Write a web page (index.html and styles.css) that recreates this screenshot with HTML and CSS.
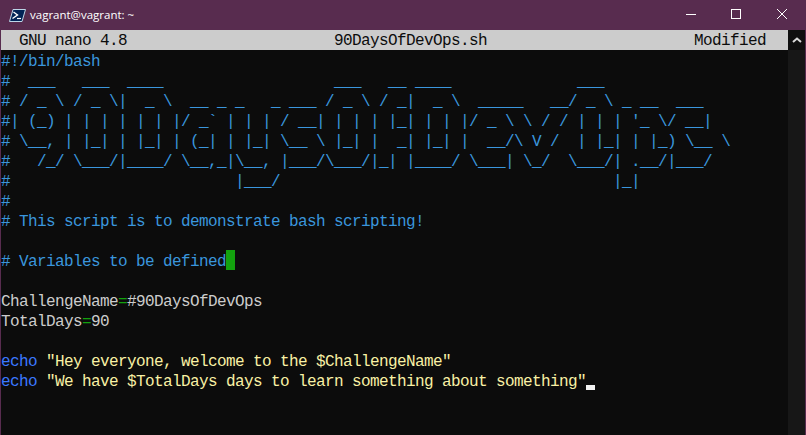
FILE: index.html
```
<!DOCTYPE html>
<html lang="en">
<head>
<meta charset="utf-8">
<title>vagrant@vagrant: ~</title>
<link rel="stylesheet" href="styles.css">
</head>
<body>
<div class="window">
  <header class="titlebar">
    <svg class="app-icon" width="17" height="13" viewBox="0 0 17 13">
      <path d="M4 .5H16.500L13 12.500H.5Z" fill="#012456" stroke="#bcd6e8"/>
      <path d="M4.500 3 8.500 6 3.500 9.500" fill="none" stroke="#fff" stroke-width="1.4"/>
      <path d="M8 9.500H12" fill="none" stroke="#fff" stroke-width="1.2"/>
    </svg>
    <span class="title">vagrant@vagrant: ~</span>
    <div class="controls">
      <svg class="ctl" width="46" height="30" viewBox="0 0 46 30"><path d="M19 14.500H29" stroke="#fff" fill="none"/></svg>
      <svg class="ctl" width="46" height="30" viewBox="0 0 46 30"><rect x="18.500" y="9.500" width="9" height="9" stroke="#fff" fill="none"/></svg>
      <svg class="ctl" width="46" height="30" viewBox="0 0 46 30"><path d="M18 9 28 19M28 9 18 19" stroke="#fff" fill="none"/></svg>
    </div>
  </header>
  <div class="body">
    <main class="term">
      <div class="nano-bar"><span class="nano-version">GNU nano 4.8</span><span class="nano-file">90DaysOfDevOps.sh</span><span class="nano-state">Modified</span></div>
<pre class="code"><span class="c">#!/bin/bash
#  ___   ___  ____                   ___   __ ____              ___
# / _ \ / _ \|  _ \  __ _ _   _ ___ / _ \ / _|  _ \  _____   __/ _ \ _ __  ___
#| (_) | | | | | | |/ _` | | | / __| | | | |_| | | |/ _ \ \ / / | | | '_ \/ __|
# \__, | |_| | |_| | (_| | |_| \__ \ |_| |  _| |_| |  __/\ V /  | |_| | |_) \__ \
#   /_/ \___/|____/ \__,_|\__, |___/\___/|_| |____/ \___| \_/  \___/| .__/|___/
#                         |___/                                     |_|
#
# This script is to demonstrate bash scripting!

# Variables to be defined</span><span class="mark"></span>

ChallengeName<span class="g">=</span>#90DaysOfDevOps
TotalDays<span class="g">=</span>90

<span class="k">echo</span> <span class="s">"Hey everyone, welcome to the $ChallengeName"</span>
<span class="k">echo</span> <span class="s">"We have $TotalDays days to learn something about something"</span><span class="cursor"></span></pre>
    </main>
    <aside class="scrollbar">
      <div class="scroll-up">
        <svg width="10" height="6" viewBox="0 0 10 6"><path d="M1 5 5 1.500 9 5" fill="none" stroke="#d8d8d8" stroke-width="2"/></svg>
      </div>
    </aside>
  </div>
</div>
</body>
</html>
```
FILE: styles.css
```
html, body {
  margin: 0;
  padding: 0;
  height: 100%;
  background: #0c0c0c;
}
.window {
  width: 806px;
  height: 435px;
  display: flex;
  flex-direction: column;
  overflow: hidden;
  box-sizing: border-box;
  border-left: 1px solid #582c4f;
  border-right: 1px solid #582c4f;
}
.titlebar {
  height: 30px;
  flex: none;
  background: #582c4f;
  display: flex;
  align-items: center;
  padding-left: 8px;
  color: #fff;
}
.app-icon { flex: none; margin-right: 4px; }
.title {
  font: 11.5px/30px "Open Sans", "Noto Sans", sans-serif;
}
.controls {
  margin-left: auto;
  display: flex;
}
.ctl { display: block; }
.body {
  flex: 1;
  display: flex;
  min-height: 0;
}
.term {
  width: 787px;
  flex: none;
  font: 16px/20px "Liberation Mono", "DejaVu Sans Mono", monospace;
  letter-spacing: -0.6px;
  background: #0c0c0c;
  color: #cccccc;
}
.nano-bar {
  height: 20px;
  box-sizing: border-box;
  padding-top: 1px;
  padding-left: 18px;
  background: #cccccc;
  color: #0c0c0c;
  white-space: pre;
  display: grid;
  grid-template-columns: 315px 360px 1fr;
}
.code {
  margin: 0;
  padding-top: 2px;
  font: inherit;
  white-space: pre;
}
.c { color: #3a96dd; }
.mark {
  display: inline-block;
  width: 9px;
  height: 18px;
  background: #13a10e;
  box-shadow: 0 -2px 0 #13a10e;
  vertical-align: -4px;
}
.g { color: #13a10e; }
.k { color: #3b78ff; }
.s { color: #f9f1a5; }
.cursor {
  display: inline-block;
  width: 9px;
  height: 5px;
  background: #f2f2f2;
  vertical-align: -4px;
}
.scrollbar {
  flex: 1;
  background: #171717;
}
.scroll-up {
  height: 20px;
  background: #0f0f0f;
  display: flex;
  align-items: center;
  justify-content: center;
}
.scroll-up svg { display: block; }
```
